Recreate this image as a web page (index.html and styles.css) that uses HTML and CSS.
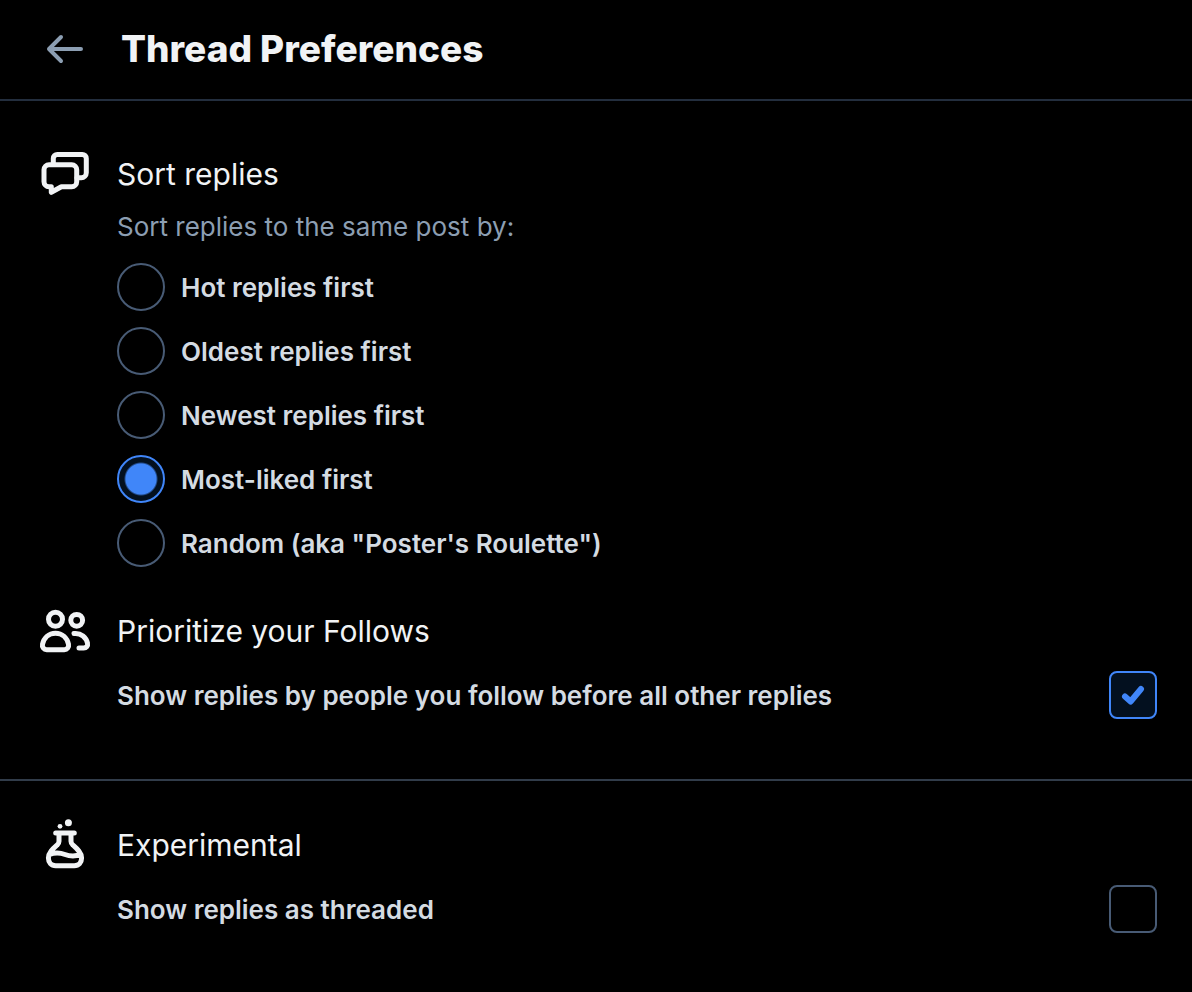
FILE: index.html
```
<!DOCTYPE html>
<html lang="en">
<head>
<meta charset="utf-8">
<meta name="viewport" content="width=device-width, initial-scale=1">
<title>Thread Preferences</title>
<link rel="stylesheet" href="styles.css">
</head>
<body>
<header class="header">
  <button class="back" type="button" aria-label="Back">
    <svg width="38" height="30" viewBox="0 0 38 30" aria-hidden="true"><path d="M15 3 3 15l12 12M3 15h32"/></svg>
  </button>
  <h1 class="title">Thread Preferences</h1>
</header>
<main>
  <div class="panel">
    <section class="group" aria-labelledby="sort-title">
      <svg class="icon" viewBox="0 0 56 56" aria-hidden="true">
        <path d="M16.3 18v-5.6a4 4 0 0 1 4-4h25a4 4 0 0 1 4 4v14.300a5 5 0 0 1-5 5H40"/>
        <path d="M12 18.7h22.700a5 5 0 0 1 5 5v12a5 5 0 0 1-5 5H24.400L14.300 46.300v-5.600H12a5 5 0 0 1-5-5v-12a5 5 0 0 1 5-5z"/>
      </svg>
      <h2 class="group-title" id="sort-title">Sort replies</h2>
      <p class="hint">Sort replies to the same post by:</p>
      <div class="options" role="radiogroup" aria-labelledby="sort-title">
        <label class="option"><input class="radio" type="radio" name="sort">Hot replies first</label>
        <label class="option"><input class="radio" type="radio" name="sort">Oldest replies first</label>
        <label class="option"><input class="radio" type="radio" name="sort">Newest replies first</label>
        <label class="option"><input class="radio" type="radio" name="sort" checked>Most-liked first</label>
        <label class="option"><input class="radio" type="radio" name="sort">Random (aka "Poster's Roulette")</label>
      </div>
    </section>
    <section class="group">
      <svg class="icon" viewBox="0 0 56 56" aria-hidden="true">
        <circle cx="18.5" cy="16.3" r="7"/>
        <circle cx="39.7" cy="17.3" r="5.9"/>
        <path d="M18.5 30.3c-6.8 0-11.6 4.8-13 11-.6 2.9 1.3 5.4 4.2 5.4h17.6c2.9 0 4.8-2.5 4.2-5.4-1.4-6.2-6.2-11-13-11z"/>
        <path d="M37 30.6c7.3-.8 12.2 4.2 13.5 9.6.6 2.7-1.2 4.8-3.8 4.8H42"/>
      </svg>
      <h2 class="group-title">Prioritize your Follows</h2>
      <label class="toggle">Show replies by people you follow before all other replies
        <span class="check">
          <input class="box" type="checkbox" checked>
          <svg class="tick" viewBox="0 0 48 48" aria-hidden="true"><path d="m16 25.5 5.600 5L32 18"/></svg>
        </span>
      </label>
    </section>
  </div>
  <div class="panel experimental">
    <section class="group">
      <svg class="icon" viewBox="0 0 56 56" aria-hidden="true">
        <path d="M18.7 16h18.6M22 16v8.2c0 1.500-.6 2.600-1.700 3.600-4.300 3.800-8.900 7.700-8.900 13.200 0 4.500 2.800 7.700 7.300 7.700h18.600c4.500 0 7.300-3.200 7.300-7.700 0-5.500-4.600-9.400-8.900-13.200-1.100-1-1.700-2.100-1.700-3.600V16M12.700 37.300c5.300-1.700 10.300-1.600 15.300.2s10.300 1.800 15.600.2"/>
        <circle class="dot" cx="23" cy="9.3" r="2.4"/>
        <circle class="dot" cx="31.4" cy="5.7" r="3.5"/>
      </svg>
      <h2 class="group-title">Experimental</h2>
      <label class="toggle">Show replies as threaded
        <span class="check">
          <input class="box" type="checkbox">
          <svg class="tick" viewBox="0 0 48 48" aria-hidden="true"><path d="m16 25.5 5.600 5L32 18"/></svg>
        </span>
      </label>
    </section>
  </div>
</main>
</body>
</html>
```
FILE: styles.css
```
* {
  box-sizing: border-box;
}

body {
  margin: 0;
  background: #000;
  color: #f1f3f5;
  font-family: Inter, "Liberation Sans", sans-serif;
}

h1, h2, p {
  margin: 0;
}

.header {
  display: flex;
  align-items: center;
  gap: 37px;
  padding: 24px 35px 26px 46px;
  border-bottom: 2px solid #232e3e;
}

.back {
  display: flex;
  padding: 0;
  border: 0;
  background: none;
  cursor: pointer;
}

.back svg {
  fill: none;
  stroke: #8c9eb2;
  stroke-width: 4;
  stroke-linecap: round;
  stroke-linejoin: round;
}

.title {
  font-size: 37px;
  line-height: 49px;
  font-weight: 800;
}

.panel {
  display: flex;
  flex-direction: column;
  gap: 36px;
  padding: 45px 35px 60px 37px;
}

.experimental {
  padding-top: 36px;
  border-top: 2px solid #313c4a;
}

.group {
  display: grid;
  grid-template-columns: 56px 1fr;
  column-gap: 24px;
  align-items: center;
}

.group > * {
  grid-column: 2;
}

.group > .icon {
  grid-column: 1;
  width: 56px;
  height: 56px;
}

.icon {
  fill: none;
  stroke: #f1f3f5;
  stroke-width: 5;
  stroke-linecap: round;
  stroke-linejoin: round;
}

.dot {
  fill: #f1f3f5;
  stroke: none;
}

.group-title {
  font-size: 30px;
  line-height: 40px;
  font-weight: 400;
}

.hint {
  margin: 9px 0 20px;
  color: #8c9eb2;
  font-size: 26px;
  line-height: 32px;
}

.options {
  display: flex;
  flex-direction: column;
  gap: 16px;
}

.option,
.toggle {
  display: flex;
  align-items: center;
  gap: 16px;
  color: #d4dbe2;
  font-size: 26px;
  line-height: 33px;
  font-weight: 600;
}

.toggle {
  justify-content: space-between;
  margin-top: 12px;
}

.radio,
.box {
  appearance: none;
  flex: none;
  width: 48px;
  height: 48px;
  margin: 0;
  border: 2px solid #485b75;
  background: #000;
}

.radio {
  border-radius: 50%;
}

.box {
  display: block;
  border-radius: 8px;
}

.radio:checked,
.box:checked {
  border-color: #4086f9;
  background: #03101f;
}

.radio:checked {
  background: radial-gradient(circle, #4086f9 15px, #03101f 17px);
}

.check {
  position: relative;
  flex: none;
}

.tick {
  position: absolute;
  inset: 0;
  display: none;
  fill: none;
  stroke: #4086f9;
  stroke-width: 6;
  stroke-linecap: round;
  stroke-linejoin: round;
  pointer-events: none;
}

.box:checked + .tick {
  display: block;
}
```
